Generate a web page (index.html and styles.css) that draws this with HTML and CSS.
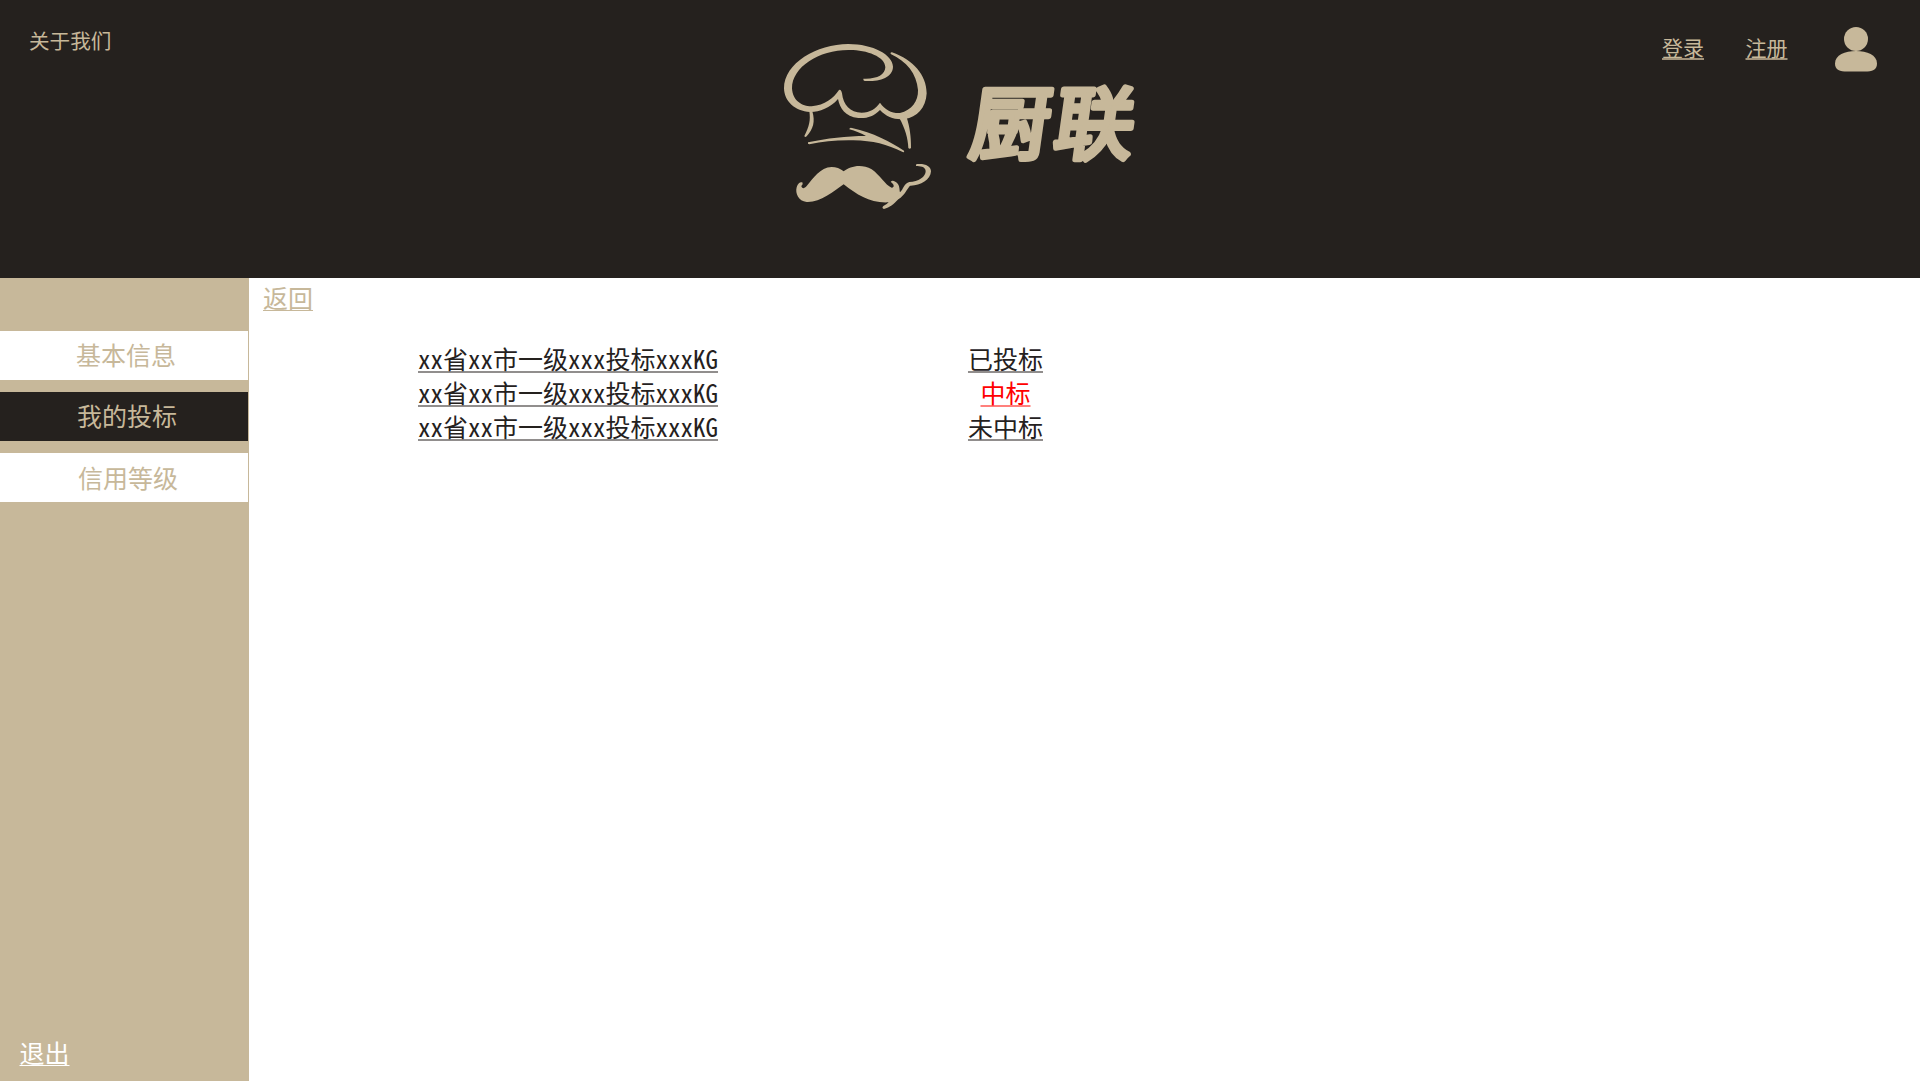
FILE: index.html
```html
<!DOCTYPE html>
<html lang="zh-CN">
<head>
<meta charset="utf-8">
<title>厨联</title>
<link rel="stylesheet" href="styles.css">
</head>
<body>
<header class="header">
  <a class="about">关于我们</a>
  <div class="brand">
    <svg class="brand-mark" viewBox="0 0 540 570" aria-hidden="true">
      <path d="M280 146C320 148 345 135 346 112C346 80 290 60 240 60C150 58 66 110 66 175C68 215 100 230 125 229C165 225 190 205 207 180Q213 176 216 190C220 225 240 248 275 248C300 248 318 235 330 218C345 240 365 250 390 249C425 240 445 215 444 180C440 130 410 95 362 72Q360 66 366 67C430 90 470 135 470 190C468 235 440 262 405 267C375 270 350 262 330 240C310 260 290 266 265 264C225 260 210 235 204 207C180 235 145 247 120 246C75 243 43 215 42 175C42 100 140 42 235 42C310 42 368 75 369 110C368 145 325 155 284 153Q279 151 280 146Z"/>
      <path d="M118 244C122 270 118 290 103 318Q105 323 110 319C130 297 136 275 127 244Z"/>
      <path d="M388 264C405 295 414 325 415 354Q419 358 423 354C423 320 420 295 410 262Z"/>
      <path d="M114 337C170 325 230 318 288 318C275 310 255 303 238 298Q238 292 246 294C310 308 360 335 402 362Q404 368 398 366C350 343 310 332 250 331C200 330 160 334 118 343Q112 343 114 337Z"/>
      <path d="M221 424C240 408 275 400 305 418C330 435 345 465 365 473C375 472 372 462 362 456Q366 449 376 455C390 462 388 478 390 487C400 478 402 460 418 456C445 456 468 440 467 423C465 408 450 409 438 408Q436 402 442 402C465 400 483 408 483 424C482 450 450 468 420 467C412 475 405 495 385 508C370 523 360 533 342 537Q334 534 340 528Q352 522 356 517C300 520 262 495 221 463C190 485 150 518 110 516C85 514 75 490 80 472C84 458 92 455 98 458Q99 464 94 468C96 477 103 476 110 468C130 445 150 412 185 411Q205 411 221 424Z"/>
    </svg>
    <svg class="brand-name" viewBox="0 0 200 110">
      <text transform="translate(17 83) skewX(-8)" textLength="164">厨联</text>
    </svg>
  </div>
  <nav class="account">
    <a class="account-link">登录</a>
    <a class="account-link">注册</a>
    <svg class="avatar" viewBox="0 0 42 45" aria-hidden="true">
      <circle cx="21" cy="12" r="12"/>
      <path d="M21 24C32 24 42 28 42 36.500C42 43 37 44.600 30 44.600H12C5 44.600 0 43 0 36.500C0 28 10 24 21 24Z"/>
    </svg>
  </nav>
</header>
<div class="page">
  <aside class="sidebar">
    <nav class="menu">
      <a class="menu-item menu-info">基本信息</a>
      <a class="menu-item menu-bids active">我的投标</a>
      <a class="menu-item menu-credit">信用等级</a>
    </nav>
    <a class="logout">退出</a>
  </aside>
  <main class="content">
    <a class="back">返回</a>
    <div class="bids">
      <div class="bid">
        <a class="bid-name">xx省xx市一级xxx投标xxxKG</a>
        <div class="bid-status"><a>已投标</a></div>
      </div>
      <div class="bid">
        <a class="bid-name">xx省xx市一级xxx投标xxxKG</a>
        <div class="bid-status won"><a>中标</a></div>
      </div>
      <div class="bid">
        <a class="bid-name">xx省xx市一级xxx投标xxxKG</a>
        <div class="bid-status"><a>未中标</a></div>
      </div>
    </div>
  </main>
</div>
</body>
</html>
```
FILE: styles.css
```css
* { box-sizing: border-box; }

body {
  margin: 0;
  height: 1081px;
  display: flex;
  flex-direction: column;
  background: #fff;
  color: #25211e;
  font: 25px/34px "Noto Sans CJK SC", sans-serif;
  overflow: hidden;
}

a { white-space: nowrap; }

.header {
  height: 278px;
  flex: none;
  display: grid;
  grid-template-columns: 770px 380px 1fr;
  align-items: start;
  background: #25211e;
  color: #c7b89a;
}

.about {
  padding: 25px 0 0 29px;
  font-size: 20.6px;
  line-height: 30px;
}

.brand { display: flex; padding-top: 30px; }

.brand-mark {
  width: 180px;
  height: 190px;
  flex: none;
  fill: #c7b89a;
}

.brand-name {
  width: 200px;
  height: 110px;
  margin-top: 40px;
  flex: none;
  overflow: visible;
  fill: #c7b89a;
  stroke: #c7b89a;
  stroke-width: 5.5px;
  stroke-linejoin: round;
  stroke-linecap: round;
  font-size: 80px;
  font-weight: 400;
}

.account {
  display: flex;
  justify-content: flex-end;
  padding: 27px 43px 0 0;
}

.account-link {
  margin: 5px 41.500px 0 0;
  font-size: 21px;
  line-height: 30px;
  text-decoration: underline 2px;
  text-decoration-color: #a09179;
  text-decoration-skip-ink: none;
  text-underline-offset: 2px;
}

.avatar {
  width: 42px;
  height: 45px;
  margin-left: 6px;
  fill: #c7b89a;
}

.page { flex: 1; display: flex; }

.sidebar {
  width: 249px;
  flex: none;
  display: flex;
  flex-direction: column;
  justify-content: space-between;
  align-items: flex-start;
  padding: 53px 0 12px;
  background: #c7b89a;
}

.menu {
  width: 248px;
  display: flex;
  flex-direction: column;
  gap: 12px;
}

.menu-item {
  height: 49px;
  line-height: 49px;
  background: #fff;
  color: #c7b89a;
}

.menu-info { padding-left: 76px; line-height: 47px; }
.menu-bids { padding-left: 77px; line-height: 47px; }
.menu-credit { padding-left: 78px; }
.menu-item.active { background: #25211e; }

.logout, .back {
  text-decoration: underline 1px;
  text-decoration-skip-ink: none;
  text-underline-offset: 2px;
}

.logout { margin-left: 19.500px; color: #fff; }

.content { flex: 1; padding-top: 2px; }

.back {
  display: block;
  width: 50px;
  margin-left: 14px;
  color: #c7b89a;
}

.bids { margin: 27px 0 0 169px; }

.bid {
  height: 34px;
  display: grid;
  grid-template-columns: 300px 575px;
}

.bid-name, .bid-status a {
  text-decoration: underline 2px #918e8d;
  text-decoration-skip-ink: none;
  text-underline-offset: 2px;
}

.bid-name { font-family: "Noto Sans Mono CJK SC", "Liberation Mono", "Noto Sans CJK SC", monospace; }

.bid-status { text-align: center; }
.won { color: #f00; }
.won a { text-decoration-color: #ff807c; }
```
